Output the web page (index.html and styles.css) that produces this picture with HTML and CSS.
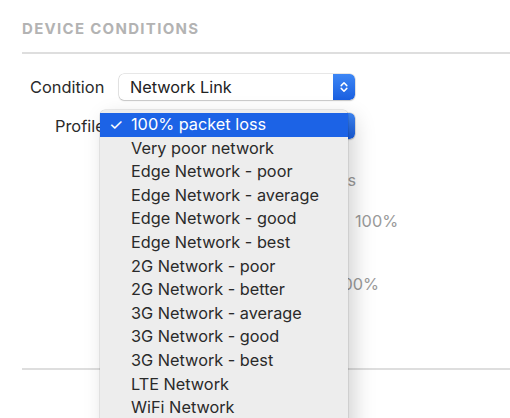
FILE: index.html
```html
<!DOCTYPE html>
<html>
<head>
<meta charset="utf-8">
<link rel="stylesheet" href="styles.css">
</head>
<body>
<div class="panel">
  <h2 class="heading">DEVICE CONDITIONS</h2>
  <div class="rule"></div>
  <div class="form">
    <div class="row">
      <span class="label">Condition</span>
      <div class="select">
        <span class="value">Network Link</span>
        <span class="stepper">
          <svg width="10" height="14" viewBox="0 0 10 14"><path d="M2.2 5.6 L5 2.8 L7.8 5.6 M2.2 8.4 L5 11.2 L7.8 8.4" fill="none" stroke="#fff" stroke-width="1.5" stroke-linecap="round" stroke-linejoin="round"/></svg>
        </span>
      </div>
    </div>
    <div class="row row2">
      <span class="label label2">Profile</span>
      <div class="select">
        <span class="value">100% packet loss</span>
        <span class="stepper"></span>
      </div>
    </div>
    <div class="hidden-rows">
      <div class="hrow r1"><span class="muted">Packets</span></div>
      <div class="hrow r2"><span class="muted">100%</span></div>
      <div class="hrow r3"><span class="muted">100%</span></div>
    </div>
  </div>
  <div class="rule rule2"></div>
</div>
<div class="menu">
  <div class="item selected"><span class="check">✓</span>100% packet loss</div>
  <div class="item">Very poor network</div>
  <div class="item">Edge Network - poor</div>
  <div class="item">Edge Network - average</div>
  <div class="item">Edge Network - good</div>
  <div class="item">Edge Network - best</div>
  <div class="item">2G Network - poor</div>
  <div class="item">2G Network - better</div>
  <div class="item">3G Network - average</div>
  <div class="item">3G Network - good</div>
  <div class="item">3G Network - best</div>
  <div class="item">LTE Network</div>
  <div class="item">WiFi Network</div>
</div>
</body>
</html>
```
FILE: styles.css
```css
html, body {
  margin: 0;
  padding: 0;
  background: #fff;
  overflow: hidden;
  width: 510px;
  height: 418px;
}
body {
  font-family: Inter, "Open Sans", sans-serif;
  color: #2a2a2a;
  position: relative;
}
.panel {
  padding: 20px 0 0 22px;
}
.heading {
  margin: 0;
  font-size: 15px;
  font-weight: 700;
  letter-spacing: 1.3px;
  color: #b3b3b3;
  line-height: 18px;
}
.rule {
  height: 2px;
  background: #dedede;
  margin-top: 14px;
}
.form {
  padding: 19px 0 0 8px;
}
.row {
  display: flex;
  align-items: center;
  height: 28px;
}
.row2 {
  margin-top: 11px;
}
.label {
  font-size: 16.4px;
  width: 89px;
  color: #2a2a2a;
}
.label2 {
  padding-left: 25px;
  width: 64px;
}
.select {
  width: 236px;
  height: 26px;
  border-radius: 5px;
  background: #fff;
  box-shadow: 0 0 0 0.5px rgba(0,0,0,0.18), 0 1px 1.5px rgba(0,0,0,0.15);
  display: flex;
  align-items: center;
  justify-content: space-between;
  overflow: hidden;
}
.value {
  font-size: 16.3px;
  padding-left: 11px;
  color: #222;
}
.stepper {
  width: 22px;
  height: 26px;
  background: linear-gradient(#3d86f5, #1a5fe0);
  display: flex;
  align-items: center;
  justify-content: center;
  border-radius: 0 5px 5px 0;
}
.hidden-rows {
  height: 230px;
}
.hrow {
  display: flex;
  font-size: 16.3px;
  height: 20px;
  line-height: 20px;
}
.muted {
  color: #9a9a9a;
}
.r1 {
  margin-top: 30px;
  width: 326px;
  justify-content: flex-end;
}
.r2 {
  margin-top: 21px;
  padding-left: 325px;
}
.r3 {
  margin-top: 43px;
  width: 349px;
  justify-content: flex-end;
}
.rule2 {
  position: absolute;
  left: 22px;
  right: 0;
  top: 368px;
  margin-top: 0;
}
.menu {
  position: absolute;
  left: 100px;
  top: 110px;
  width: 248px;
  height: 330px;
  background: #ededed;
  border-radius: 5px;
  box-shadow: 0 0 0 0.5px rgba(0,0,0,0.15), 6px 8px 22px rgba(0,0,0,0.18);
  padding-top: 3px;
  box-sizing: border-box;
}
.item {
  height: 23.6px;
  line-height: 23.6px;
  font-size: 16.3px;
  padding-left: 31px;
  position: relative;
  color: #2a2a2a;
  white-space: nowrap;
}
.item.selected {
  background: #1c63e6;
  color: #fff;
}
.check {
  position: absolute;
  left: 9px;
  font-size: 16px;
}
```
